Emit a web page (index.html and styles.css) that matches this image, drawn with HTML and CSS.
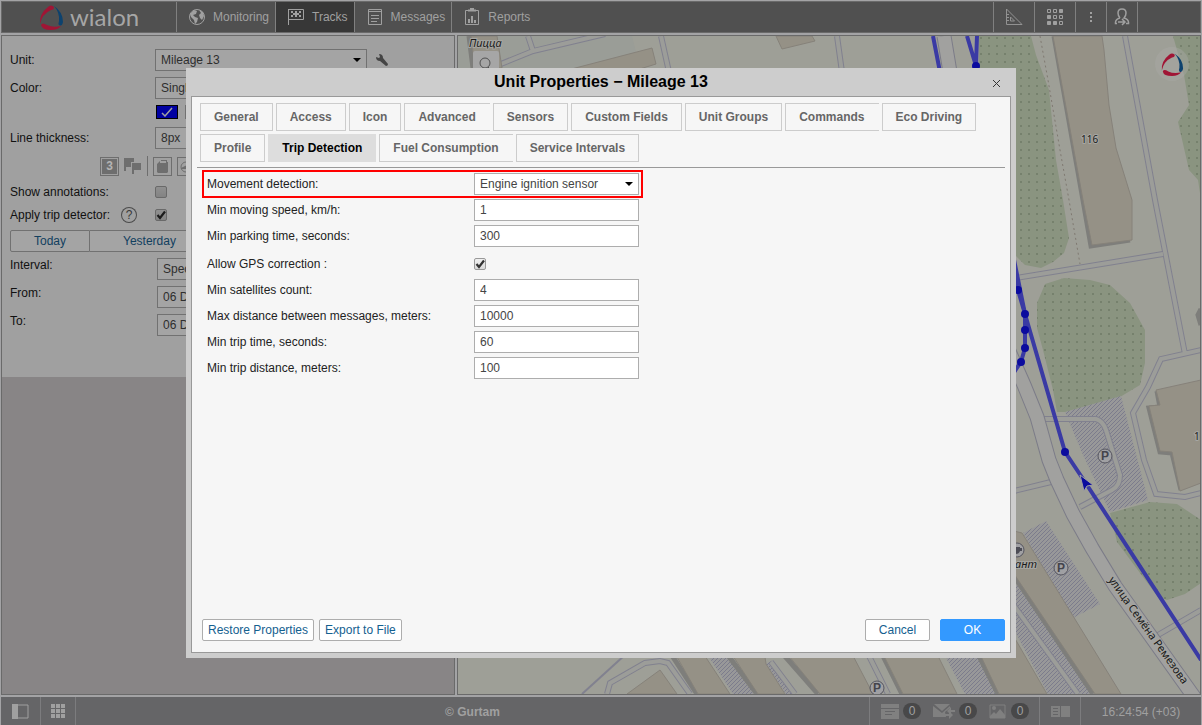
FILE: index.html
```html
<!DOCTYPE html>
<html lang="en">
<head>
    <meta charset="UTF-8">
    <meta name="viewport" content="width=device-width, initial-scale=1.0">
    <title>Wialon - Unit Properties</title>
    <link rel="stylesheet" href="styles.css">
</head>
<body>
    <header class="topbar">
        <a href="#" class="logo">
            <svg class="logo-mark" width="26" height="26" viewBox="0 0 26 26">
                <path d="M16 3Q13 0 10 3Q1 10 2 20Q4 10 13 6Q16 6 16 3Z" fill="#a01535"/>
                <path d="M3 21Q4 26 13 26Q20 26 23 22Q15 24 9 21Q4 18 3 21Z" fill="#a01535"/>
                <path d="M16 2Q25 8 25 18Q24 23 21 21Q20 20 21 17Q22 9 16 2Z" fill="#0d426e"/>
            </svg>
            <span class="logo-text">wialon</span>
        </a>
        <nav class="main-nav">
            <a href="#" class="nav-item">
                <svg width="18" height="18" viewBox="0 0 18 18">
                    <circle cx="9" cy="9" r="7.5" fill="none" stroke="#a0a0a0"/>
                    <path d="M2 6L6 2L9 3L8 6L5 7L7 9L10 10L9 14L7 16L6 12L3 9ZM11 2L15 4L16 8L14 12L12 10L11 7L13 5Z" fill="#a0a0a0"/>
                </svg>
                Monitoring
            </a>
            <a href="#" class="nav-item active">
                <svg width="18" height="18" viewBox="0 0 18 18">
                    <path d="M1.500 1V17M1 1.500H16.500V11.500H2" fill="none" stroke="#a0a0a0"/>
                    <path d="M4 3h2v2h2v-2h2v2h2v-2h2v2h-2v2h2v2h-2v-2h-2v2h-2v-2h-2v2h-2v-2h2v-2h-2z" fill="#a0a0a0"/>
                </svg>
                Tracks
            </a>
            <a href="#" class="nav-item">
                <svg width="18" height="18" viewBox="0 0 18 18" fill="none" stroke="#a0a0a0">
                    <path d="M2.500 1.500H15.500V16.500H2.500Z"/>
                    <path d="M2 3.500H16M5 7.500H13M5 10.500H13M5 13.500H11"/>
                </svg>
                Messages
            </a>
            <a href="#" class="nav-item">
                <svg width="18" height="18" viewBox="0 0 18 18" fill="none" stroke="#a0a0a0">
                    <path d="M5 2.500H2.500V16.500H15.500V2.500H13"/>
                    <path d="M5 2.500H13M7 1H11" stroke-width="2"/>
                    <path d="M6 15V11M9 15V8M12 15V12" stroke-width="2"/>
                </svg>
                Reports
            </a>
        </nav>
        <div class="tools">
            <button class="tool" aria-label="Tools">
                <svg width="18" height="18" viewBox="0 0 18 18" fill="none" stroke="#929292">
                    <path d="M1.500 1L17 16.500H1.500ZM5.500 9V13H9.500ZM2 6.500H4M2 9.500H4M2 12.500H4"/>
                </svg>
            </button>
            <button class="tool" aria-label="Apps">
                <svg width="18" height="18" viewBox="0 0 18 18" fill="none" stroke="#a0a0a0" stroke-width="1">
                    <path d="M1.500 1.500h3v3h-3zM7.500 1.500h3v3h-3zM7.500 7.500h3v3h-3zM13.500 7.500h3v3h-3zM13.500 13.500h3v3h-3z"/>
                    <path d="M13.500 1.500h3v3h-3zM1.500 7.500h3v3h-3zM1.500 13.500h3v3h-3zM7.500 13.500h3v3h-3z" fill="#a0a0a0"/>
                </svg>
            </button>
            <button class="tool narrow" aria-label="More">
                <svg width="4" height="12" viewBox="0 0 4 12" fill="#a0a0a0">
                    <path d="M1 1h2v2h-2zM1 5h2v2h-2zM1 9h2v2h-2z"/>
                </svg>
            </button>
            <button class="tool narrow" aria-label="User">
                <svg width="18" height="18" viewBox="0 0 18 18" fill="none" stroke="#a0a0a0">
                    <path d="M7 10Q5 8 5 5Q5 1 9 1Q13 1 13 5Q13 8 11 10Q15 11 15.500 14V15.500H13M7 10Q3 11 2.500 14V15.500H4" stroke-width="1.500"/>
                    <path d="M5 14H12M9 11L12 14L9 17" stroke-width="1.500"/>
                </svg>
            </button>
        </div>
    </header>

    <main class="workspace">
        <section class="side-panel">
            <form class="track-form">
                <div class="row">
                    <label class="row-label" for="unit">Unit:</label>
                    <span class="select-wrap wide">
                        <select id="unit"><option>Mileage 13</option></select>
                    </span>
                    <svg class="wrench" width="12" height="12" viewBox="0 0 12 12">
                        <path d="M0 3L3 4L4 3L3 0Q7 0 7 4L12 10Q12 12 10 12L4 7Q0 7 0 3Z" fill="#454545"/>
                    </svg>
                </div>
                <div class="row">
                    <label class="row-label" for="color">Color:</label>
                    <span class="select-wrap wide">
                        <select id="color"><option>Single</option></select>
                    </span>
                </div>
                <div class="row swatches">
                    <button type="button" class="swatch" aria-label="Blue">
                        <svg width="12" height="10" viewBox="0 0 12 10" fill="none" stroke="#a0a0a0" stroke-width="1.500">
                            <path d="M1 6L4 9L11 1"/>
                        </svg>
                    </button>
                    <button type="button" class="swatch grey" aria-label="Grey"></button>
                </div>
                <div class="row">
                    <label class="row-label" for="thickness">Line thickness:</label>
                    <span class="select-wrap wide">
                        <select id="thickness"><option>8px</option></select>
                    </span>
                </div>
                <div class="row marks">
                    <button type="button" class="mark filled" aria-label="Point numbers">3</button>
                    <svg width="18" height="18" viewBox="0 0 18 18" fill="#6e6e6e">
                        <path d="M0 1H10V5H7V10H2V14H0Z"/>
                        <path d="M8 6H17V13H10V17H8Z"/>
                    </svg>
                    <span class="mark-sep"></span>
                    <button type="button" class="mark" aria-label="Fuel">
                        <svg width="13" height="13" viewBox="0 0 13 13" fill="#6e6e6e"><path d="M1 4L4 1V3H10V1H5V0H11V2H12V12L11 13H2L1 12Z"/></svg>
                    </button>
                    <button type="button" class="mark" aria-label="Speed">
                        <svg width="13" height="13" viewBox="0 0 13 13"><circle cx="6" cy="7" r="5" fill="none" stroke="#6e6e6e"/><path d="M1 8L11 3V9H1Z" fill="#6e6e6e"/></svg>
                    </button>
                </div>
                <div class="row checks">
                    <label class="row-label" for="annotations">Show annotations:</label>
                    <input type="checkbox" id="annotations">
                </div>
                <div class="row checks">
                    <label class="row-label" for="detector">Apply trip detector:</label>
                    <span class="help">?</span>
                    <input type="checkbox" id="detector" checked>
                </div>
                <div class="row periods">
                    <button type="button">Today</button>
                    <button type="button">Yesterday</button>
                </div>
                <div class="row interval">
                    <label class="row-label" for="interval">Interval:</label>
                    <span class="select-wrap"><select id="interval"><option>Specified</option></select></span>
                </div>
                <div class="row interval">
                    <label class="row-label" for="from">From:</label>
                    <input type="text" id="from" value="06 December">
                </div>
                <div class="row interval">
                    <label class="row-label" for="to">To:</label>
                    <input type="text" id="to" value="06 December">
                </div>
            </form>
        </section>

        <section class="map">
            <svg class="map-canvas" viewBox="458 36 742 658" preserveAspectRatio="xMaxYMin slice">
                <defs>
                    <pattern id="trees" width="8" height="8" patternUnits="userSpaceOnUse">
                        <rect width="8" height="8" fill="#8a9480"/>
                        <rect x="4" y="5" width="2" height="2" fill="#76816d"/>
                    </pattern>
                    <pattern id="hatch" width="4" height="4" patternUnits="userSpaceOnUse">
                        <rect width="4" height="4" fill="#989899"/>
                        <path d="M-1 1L1 -1M0 4L4 0M3 5L5 3" stroke="#7c7c8c"/>
                    </pattern>
                </defs>
                <rect x="458" y="36" width="743" height="658" fill="#9e9f97"/>
                <path d="M458 36H632L640 68H458Z" fill="#9a9d97"/>

                <!-- greenery -->
                <g fill="url(#trees)">
                    <path d="M979 36H1031L1036 55L1049 90L1056 160L1063 200L1069 238L1064 253L1053 262L1041 268L1025 265L1010 250L979 68Z"/>
                    <path d="M1045 284L1064 278L1090 280L1110 285L1130 303L1145 330V363L1140 385L1120 397L1066 412H1057L1053 390L1043 350L1037 328V303Z"/>
                    <path d="M1110 513L1150 502L1177 504L1201 520V583L1185 594L1167 600L1158 597L1140 573L1117 542Z"/>
                    <path d="M1173 36H1201V200L1198 180L1189 170L1178 122L1189 105L1184 75Z"/>
                </g>

                <!-- parking lots -->
                <g fill="url(#hatch)">
                    <path d="M1065 412L1121 396L1148 500L1110 512L1083 455Z"/>
                    <path d="M1023 533L1046 521L1100 604L1073 618Z"/>
                    <path d="M1010 575L1094 694H1048L1010 622Z"/>
                    <path d="M944 654H976L996 694H965Z"/>
                    <path d="M707 654H729L754 694H733Z"/>
                    <path d="M766 664L773 660L792 694H786Z"/>
                </g>

                <!-- footpaths: outline below, filling above -->
                <g class="path-edge">
                    <path d="M1010 279L1163 254"/>
                    <path d="M1125 36L1155 200L1185 354M1201 350L1161 359L1148 387L1133 413L1144 460L1156 494L1185 497L1201 493"/>
                    <path d="M1043 419H1096Q1103 421 1106 430L1120 475Q1120 486 1112 490L1080 507"/>
                    <path d="M1010 492L1051 482M1158 635L1201 610M1010 600L1078 694"/>
                    <path d="M496 66L533 51L605 34M528 36L533 51M661 36L669 72M837 36L842 72"/>
                    <path d="M607 694L610 683L645 663L660 661L668 663L690 694M771 662L795 694M868 654L888 694"/>
                </g>
                <g class="path-fill">
                    <path d="M1010 279L1163 254"/>
                    <path d="M1125 36L1155 200L1185 354M1201 350L1161 359L1148 387L1133 413L1144 460L1156 494L1185 497L1201 493"/>
                    <path d="M1043 419H1096Q1103 421 1106 430L1120 475Q1120 486 1112 490L1080 507"/>
                    <path d="M1010 492L1051 482M1158 635L1201 610M1010 600L1078 694"/>
                    <path d="M496 66L533 51L605 34M528 36L533 51M661 36L669 72M837 36L842 72"/>
                    <path d="M607 694L610 683L645 663L660 661L668 663L690 694M771 662L795 694M868 654L888 694"/>
                </g>
                <path d="M626 654L582 694" stroke="#81818f" fill="none" stroke-width="2"/>
                <path d="M1040 36L1048 80L1060 150L1069 200L1080 264" stroke="#7f7971" stroke-dasharray="2 3" fill="none"/>

                <!-- streets -->
                <path class="street-edge" d="M1004 340L1024 385L1037 417L1049 460L1057 480L1073 514L1092 548L1115 586L1192 694L1197 701M944 36L950 72"/>
                <path class="street-fill" d="M1004 340L1024 385L1037 417L1049 460L1057 480L1073 514L1092 548L1115 586L1192 694L1197 701M944 36L950 72"/>

                <!-- buildings -->
                <g fill="none" stroke="#7e7e7b" stroke-width="5">
                    <path d="M1054 36L1083 200L1091 246L1130 240"/>
                    <path d="M1157 391L1160 407L1149 408L1160 452L1172 453L1181 490"/>
                    <path d="M1010 570L1093 694M976 650L998 694M880 650L902 694M783 654L818 694M727 654L757 694M671 654L697 694"/>
                    <path d="M1201 309L1198 315L1201 325M469 36L473 68"/>
                </g>
                <g fill="#959186" stroke="#86827a">
                    <path d="M1053 36H1102L1104 50L1109 105L1116 148L1132 200V240L1092 245L1083 200Z"/>
                    <path d="M1156 390L1201 380V483L1180 491L1172 452L1160 451L1149 406L1160 405Z"/>
                    <path d="M1010 530L1022 533L1121 694H1095L1010 568Z"/>
                    <path d="M1010 630L1047 694H999L978 650H1010Z"/>
                    <path d="M881 650H935L957 694H903Z"/>
                    <path d="M784 650H850L873 694H820Z"/>
                    <path d="M729 650H764L766 664L785 694H758Z"/>
                    <path d="M673 650H701L730 694H698Z"/>
                    <path d="M627 694L660 670L677 694Z"/>
                    <path d="M560 72L652 48L656 64L630 72Z"/>
                    <path d="M471 36H497L502 68H475Z"/>
                    <path d="M776 36H812L815 41L782 49Z"/>
                </g>

                <!-- map labels -->
                <g class="map-text">
                    <text x="1081" y="143">116</text>
                    <text x="1194" y="440">1</text>
                    <text x="469" y="47" class="poi">Пицца</text>
                    <text x="1015" y="568" class="poi">ант</text>
                    <text class="street-name" transform="translate(1108 580) rotate(54.500)">улица Семёна Ремезова</text>
                </g>
                <g class="parking">
                    <circle cx="1105" cy="456" r="7"/>
                    <circle cx="1061" cy="568" r="7"/>
                    <circle cx="877" cy="688" r="7"/>
                    <circle cx="1017" cy="550" r="7"/>
                    <text x="1105" y="460">P</text>
                    <text x="1061" y="572">P</text>
                    <text x="877" y="692">P</text>
                </g>
                <path d="M1013 547H1020V551Q1019 554 1016 554H1013ZM1020 548H1022V551H1019" fill="#4c4c55"/>

                <!-- track -->
                <g class="track">
                    <path d="M933 36L940 72M967 36L976 66L977 36"/>
                    <path d="M1010 240L1018 290L1025 314V348L1021 362L1010 378"/>
                    <path d="M1010 240L1025 314L1065 452L1085 482L1201 660"/>
                </g>
                <g fill="#0b0b9e">
                    <circle cx="976" cy="66" r="4"/>
                    <circle cx="1018" cy="290" r="4"/>
                    <circle cx="1025" cy="314" r="4"/>
                    <circle cx="1025" cy="330" r="4"/>
                    <circle cx="1025" cy="348" r="4"/>
                    <circle cx="1021" cy="362" r="4"/>
                    <circle cx="1065" cy="452" r="4"/>
                    <path d="M1080 475L1093 485L1087 486L1084 491Z" stroke="#a0a0a0"/>
                </g>

                <!-- search button and watermark -->
                <rect x="473" y="51" width="26" height="26" rx="2" fill="#a6a6a6"/>
                <circle cx="485" cy="63" r="5" fill="none" stroke="#505050"/>
                <path d="M488 67L492 71" stroke="#505050"/>
                <circle cx="1172" cy="64" r="17" fill="#a9a9a7" opacity="0.400"/>
                <svg x="1160" y="52" width="24" height="24" viewBox="0 0 26 26">
                    <path d="M16 3Q13 0 10 3Q1 10 2 20Q4 10 13 6Q16 6 16 3Z" fill="#a01535"/>
                    <path d="M3 21Q4 26 13 26Q20 26 23 22Q15 24 9 21Q4 18 3 21Z" fill="#a01535"/>
                    <path d="M16 2Q25 8 25 18Q24 23 21 21Q20 20 21 17Q22 9 16 2Z" fill="#0d426e"/>
                </svg>
            </svg>
        </section>
    </main>

    <footer class="statusbar">
        <button class="status-btn first" aria-label="Toggle panel">
            <svg width="17" height="15" viewBox="0 0 17 15"><path d="M1 1H16V14H1Z" fill="none" stroke="#a0a0a0"/><path d="M0 0H6V15H0Z" fill="#a0a0a0"/></svg>
        </button>
        <button class="status-btn" aria-label="Grid">
            <svg width="15" height="15" viewBox="0 0 15 15" fill="#a0a0a0"><path d="M0 0h4v4h-4zM5 0h4v4h-4zM10 0h4v4h-4zM0 5h4v4h-4zM5 5h4v4h-4zM10 5h4v4h-4zM0 10h4v4h-4zM5 10h4v4h-4zM10 10h4v4h-4z"/></svg>
        </button>
        <p class="copyright">© Gurtam</p>
        <div class="counters">
            <svg width="18" height="15" viewBox="0 0 18 15" fill="#808080"><path d="M0 0H18V4H0ZM0 5H18V15H0Z"/><path d="M4 7H14V8H4ZM4 10H11V11H4Z" fill="#656567"/></svg>
            <span class="count">0</span>
            <svg width="22" height="15" viewBox="0 0 22 15" fill="#808080"><path d="M0 2L9 9L17 2V4L12 8L13 13H0ZM1 0H17L9 7Z"/><path d="M22 6V8H18V11L14 7L18 3V6ZM12 10H16V7L20 11L16 15V12H12Z"/></svg>
            <span class="count">0</span>
            <svg width="18" height="15" viewBox="0 0 18 15"><path d="M1 1H16V14H1Z" fill="none" stroke="#808080"/><path d="M1 12L5 8L7 10L11 5L16 11V14H1Z" fill="#808080"/><circle cx="5" cy="4" r="2" fill="#808080"/></svg>
            <span class="count">0</span>
        </div>
        <button class="status-btn" aria-label="Log">
            <svg width="19" height="11" viewBox="0 0 19 11" fill="#808080"><path d="M0 0H9V11H0ZM10 0H19V11H10Z"/><path d="M2 2H7V3H2ZM2 5H7V6H2ZM2 8H7V9H2Z" fill="#656567"/></svg>
        </button>
        <div class="clock">16:24:54 (+03)</div>
    </footer>

    <div class="overlay">
        <div class="dialog" role="dialog" aria-labelledby="dialogTitle">
            <div class="dialog-head">
                <h1 id="dialogTitle">Unit Properties − Mileage 13</h1>
                <button class="close" aria-label="Close">
                    <svg width="9" height="9" viewBox="0 0 9 9"><path d="M1 1L8 8M8 1L1 8" stroke="#333"/></svg>
                </button>
            </div>
            <div class="dialog-body">
                <div class="tabs">
                    <button class="tab">General</button>
                    <button class="tab">Access</button>
                    <button class="tab">Icon</button>
                    <button class="tab open">Advanced</button>
                    <button class="tab">Sensors</button>
                    <button class="tab">Custom Fields</button>
                    <button class="tab">Unit Groups</button>
                    <button class="tab open">Commands</button>
                    <button class="tab">Eco Driving</button>
                    <button class="tab">Profile</button>
                    <button class="tab active">Trip Detection</button>
                    <button class="tab open">Fuel Consumption</button>
                    <button class="tab">Service Intervals</button>
                </div>
                <form class="fields">
                    <div class="field highlighted">
                        <label for="movement">Movement detection:</label>
                        <span class="select-wrap">
                            <select id="movement"><option>Engine ignition sensor</option></select>
                        </span>
                    </div>
                    <div class="field">
                        <label for="speed">Min moving speed, km/h:</label>
                        <input type="text" id="speed" value="1">
                    </div>
                    <div class="field">
                        <label for="parking">Min parking time, seconds:</label>
                        <input type="text" id="parking" value="300">
                    </div>
                    <div class="field check">
                        <label for="gps">Allow GPS correction :</label>
                        <span class="check-cell"><input type="checkbox" id="gps" checked></span>
                    </div>
                    <div class="field">
                        <label for="satellites">Min satellites count:</label>
                        <input type="text" id="satellites" value="4">
                    </div>
                    <div class="field">
                        <label for="distance">Max distance between messages, meters:</label>
                        <input type="text" id="distance" value="10000">
                    </div>
                    <div class="field">
                        <label for="tripTime">Min trip time, seconds:</label>
                        <input type="text" id="tripTime" value="60">
                    </div>
                    <div class="field">
                        <label for="tripDistance">Min trip distance, meters:</label>
                        <input type="text" id="tripDistance" value="100">
                    </div>
                </form>
                <div class="actions">
                    <button class="btn">Restore Properties</button>
                    <button class="btn">Export to File</button>
                    <div class="confirm">
                        <button class="btn fixed">Cancel</button>
                        <button class="btn fixed primary">OK</button>
                    </div>
                </div>
            </div>
        </div>
    </div>
</body>
</html>
```

FILE: styles.css
```css
* {
    margin: 0;
    padding: 0;
    box-sizing: border-box;
}

body {
    background-color: #a3a3a5;
    font-family: "Liberation Sans", Arial, sans-serif;
    font-size: 12px;
    color: #1b1b1b;
    height: 100vh;
    display: flex;
    flex-direction: column;
    gap: 2px;
    padding: 1px 1px 0;
    overflow: hidden;
}

button,
input,
select {
    font: inherit;
    color: inherit;
}

button {
    border: none;
    background: none;
    cursor: pointer;
}

svg {
    flex: none;
}

/* top bar */
.topbar {
    height: 32px;
    flex: none;
    display: flex;
    background-color: #505050;
    border: 1px solid #6a6a6a;
    color: #a0a0a0;
}

.logo {
    width: 175px;
    display: flex;
    align-items: center;
    padding-left: 36px;
    gap: 6px;
    color: #a6a6a6;
    text-decoration: none;
    border-right: 1px solid #808080;
}

.logo-text {
    font-family: Lato, sans-serif;
    font-size: 24px;
    line-height: 28px;
}

.main-nav {
    display: flex;
    flex: 1;
}

.nav-item {
    display: flex;
    align-items: center;
    gap: 7px;
    padding: 0 6px 0 11px;
    color: inherit;
    text-decoration: none;
    border-right: 1px solid #808080;
}

.nav-item:last-child {
    border-right: none;
}

.nav-item.active {
    background-color: #373737;
}

.tools {
    display: flex;
    padding-right: 62px;
    border-left: 1px solid #808080;
}

.tool {
    width: 41px;
    display: flex;
    align-items: center;
    justify-content: center;
    border-right: 1px solid #808080;
}

.tool.narrow {
    width: 31px;
}

/* workspace */
.workspace {
    flex: 1;
    min-height: 0;
    display: flex;
    gap: 2px;
}

.side-panel {
    flex: none;
    width: 454px;
    background-color: #888586;
    border: 1px solid #6a6a6a;
}

.track-form {
    display: flex;
    flex-direction: column;
    gap: 6px;
    padding: 13px 0 41px 8px;
    background-color: #a0a0a0;
    color: #111;
}

.row {
    display: flex;
    align-items: center;
    height: 22px;
}

.row-label {
    width: 145px;
}

.select-wrap {
    position: relative;
    display: block;
    width: 165px;
}

.select-wrap.wide {
    width: 212px;
}

.select-wrap::after {
    content: "";
    position: absolute;
    right: 6px;
    top: 9px;
    border: 4px solid transparent;
    border-top-color: #000;
    border-bottom: none;
    pointer-events: none;
}

select,
input[type="text"] {
    appearance: none;
    display: block;
    width: 100%;
    height: 22px;
    padding: 0 5px;
    border: 1px solid #adadad;
    border-radius: 0;
    background-color: #fff;
    color: #444;
}

.track-form select,
.track-form input[type="text"] {
    background-color: #a4a4a4;
    border-color: #717171;
    color: #2e2e2e;
}

.track-form input[type="text"] {
    width: 165px;
}

.wrench {
    margin-left: 9px;
}

.swatches {
    height: 14px;
    padding-left: 146px;
    gap: 7px;
    margin-bottom: 2px;
}

.swatch {
    width: 22px;
    height: 14px;
    display: flex;
    align-items: center;
    justify-content: center;
    background-color: #0000a0;
    border: 1px solid #000;
}

.swatch.grey {
    background-color: #a0a0a0;
    border-color: #717171;
}

.marks {
    padding-left: 90px;
    gap: 5px;
}

.mark {
    width: 19px;
    height: 19px;
    display: flex;
    align-items: center;
    justify-content: center;
    border: 1px solid #6e6e6e;
}

.mark.filled {
    background-color: #6e6e6e;
    box-shadow: inset 0 0 0 1px #a0a0a0;
    color: #b4b4b4;
    font-weight: bold;
}

.mark-sep {
    width: 1px;
    height: 20px;
    background-color: #6e6e6e;
}

.checks {
    height: 17px;
}

.help {
    width: 14px;
    height: 14px;
    margin: 0 19px 0 -33px;
    border-radius: 50%;
    box-shadow: 0 0 0 1px #4a4a4a;
    color: #3a3a3a;
    text-align: center;
    line-height: 14px;
}

input[type="checkbox"] {
    appearance: none;
    width: 12px;
    height: 12px;
    border: 1px solid #999;
    border-radius: 2px;
    background: linear-gradient(#f0f0f0, #dadada);
}

input[type="checkbox"]:checked {
    background: url("data:image/svg+xml,%3Csvg xmlns='http://www.w3.org/2000/svg' viewBox='0 0 10 10'%3E%3Cpath d='M1.500 5L4 8L9 1.500' fill='none' stroke='%23333' stroke-width='2.200'/%3E%3C/svg%3E") center / 10px no-repeat, linear-gradient(#f0f0f0, #dadada);
}

.track-form input[type="checkbox"] {
    background-color: #999;
    background-blend-mode: multiply;
    border-color: #696969;
}

.periods {
    margin-top: 1px;
}

.periods button {
    height: 22px;
    padding: 0 23px;
    border: 1px solid #717171;
    border-radius: 2px 0 0 2px;
    background-color: #a4a4a4;
    color: #12405f;
}

.periods button + button {
    padding: 0 33px;
    border-left: none;
    border-radius: 0;
}

.interval .row-label {
    width: 147px;
    align-self: flex-start;
}

/* map */
.map {
    flex: 1;
    min-width: 0;
    border: 1px solid #6a6a6a;
    overflow: hidden;
}

.map-canvas {
    display: block;
    width: 100%;
    height: 100%;
}

.path-edge,
.path-fill {
    fill: none;
    stroke: #81818f;
    stroke-width: 6;
}

.path-fill {
    stroke: #9c9d99;
    stroke-width: 4;
}

.street-edge,
.street-fill {
    fill: none;
    stroke: #7c7c88;
    stroke-width: 15;
}

.street-fill {
    stroke: #a1a19f;
    stroke-width: 13;
}

.map-text {
    font-family: "Noto Sans", sans-serif;
    font-size: 10px;
    fill: #1a1a1a;
    stroke: #a6a6a2;
    stroke-width: 2px;
    paint-order: stroke;
}

.poi,
.street-name {
    font-size: 11px;
}

.poi {
    font-style: italic;
}

.parking circle {
    fill: #a0a0a3;
    stroke: #55555f;
}

.parking text {
    font-size: 12px;
    font-weight: bold;
    text-anchor: middle;
    fill: #44444c;
}

.track {
    fill: none;
    stroke: #3a3aa4;
    stroke-width: 4;
}

/* status bar */
.statusbar {
    height: 28px;
    flex: none;
    display: flex;
    align-items: stretch;
    background-color: #656567;
    color: #a0a0a0;
}

.status-btn {
    width: 35px;
    display: flex;
    align-items: center;
    justify-content: center;
    border-right: 1px solid #7c7c7e;
}

.status-btn.first {
    width: 40px;
}

.copyright {
    flex: 1;
    text-align: center;
    font-weight: bold;
    line-height: 31px;
}

.counters {
    display: flex;
    align-items: center;
    gap: 4px;
    padding: 0 10px 0 11px;
    border: solid #7c7c7e;
    border-width: 0 1px;
}

.count {
    width: 18px;
    height: 16px;
    line-height: 16px;
    margin-right: 8px;
    border-radius: 8px;
    background-color: #484849;
    text-align: center;
}

.count:last-child {
    margin-right: 0;
}

.counters + .status-btn {
    width: 41px;
}

.clock {
    width: 120px;
    text-align: center;
    line-height: 31px;
}

/* dialog */
.overlay {
    position: fixed;
    inset: 0;
    display: flex;
    align-items: center;
    justify-content: center;
}

.dialog {
    width: 830px;
    max-width: 100%;
    height: calc(100vh - 135px);
    min-height: 420px;
    display: flex;
    flex-direction: column;
    padding: 0 5px 5px;
    background-color: #cdcdcd;
}

.dialog-head {
    display: flex;
    align-items: center;
    height: 28px;
    padding: 0 10px 0 19px;
}

.dialog-head h1 {
    flex: 1;
    text-align: center;
    font-size: 16px;
    color: #000;
}

.close {
    display: flex;
    padding-top: 4px;
}

.dialog-body {
    flex: 1;
    display: flex;
    flex-direction: column;
    padding: 6px 5px 11px;
    background-color: #f6f6f6;
    border: 1px solid #999;
}

.tabs {
    display: flex;
    flex-wrap: wrap;
    gap: 3px;
    padding: 0 3px 5px;
    border-bottom: 1px solid #999;
}

.tab {
    height: 28px;
    padding: 0 13px;
    border: 1px solid #ccc;
    font-weight: bold;
    color: #666;
}

.tab.open {
    padding-right: 14px;
    border-right: none;
}

.tab.active {
    background-color: #ddd;
    border-color: #ddd;
    color: #000;
}

.fields {
    flex: 1;
    padding: 3px 6px;
}

.field {
    display: flex;
    align-items: center;
    width: 439px;
    height: 26px;
    padding: 0 3px 0 4px;
    color: #222;
}

.field.highlighted {
    outline: 2px solid #f00;
    outline-offset: -1px;
}

.field.check {
    height: 28px;
    padding-top: 2px;
}

.field label {
    flex: 1;
}

.field input[type="text"],
.check-cell {
    width: 165px;
}

.check-cell {
    display: flex;
}

.actions {
    display: flex;
    gap: 5px;
    padding-left: 5px;
}

.confirm {
    display: flex;
    gap: 10px;
    margin-left: auto;
}

.btn {
    height: 22px;
    padding: 0 5px;
    border: 1px solid #adadad;
    border-radius: 2px;
    background-color: #fff;
    color: #14608f;
}

.btn.fixed {
    width: 65px;
}

.btn.primary {
    background-color: #3399ff;
    border-color: #3399ff;
    color: #fff;
}
```
